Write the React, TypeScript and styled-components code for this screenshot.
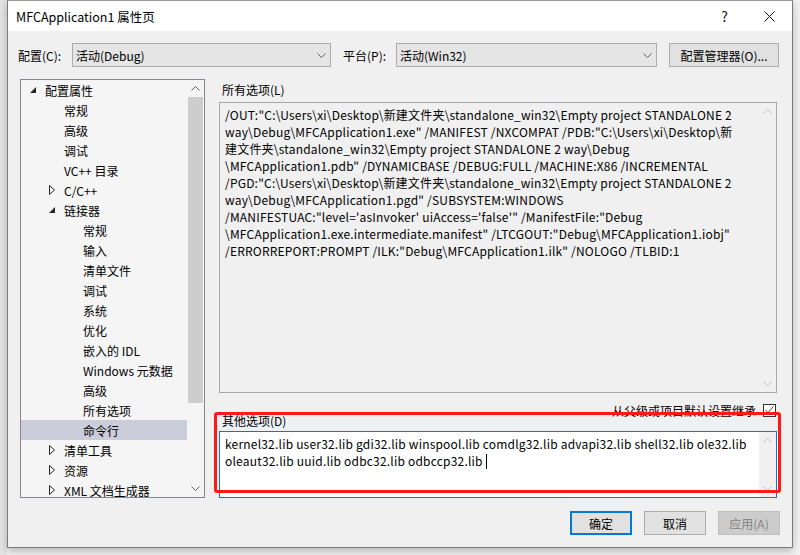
import React from 'react';
import styled, { createGlobalStyle } from 'styled-components';

const GlobalStyle = createGlobalStyle`
  html, body {
    margin: 0;
    padding: 0;
    background: #ececec;
  }
  body {
    font-family: "Noto Sans CJK SC", "Noto Sans", sans-serif;
    font-size: 12px;
    color: #000;
  }
`;

const Page = styled.div`
  width: 800px;
  height: 555px;
  overflow: hidden;
  background: linear-gradient(90deg, #e4e4e4 0, #e4e4e4 7px, #f2f2f2 7px);
`;

const Dialog = styled.div`
  position: relative;
  box-sizing: border-box;
  margin-left: 7px;
  width: 786px;
  height: 548px;
  border: 1px solid #7a7a7a;
  border-top-color: #9a9a9a;
  background: #f0f0f0;
  box-shadow: 0 3px 8px rgba(0, 0, 0, 0.25);
  display: flex;
  flex-direction: column;
`;

const TitleBar = styled.div`
  height: 30px;
  background: #fff;
  display: flex;
  align-items: center;
  padding-left: 8px;
`;

const TitleText = styled.div`
  flex: 1;
  font-size: 12.5px;
  padding-top: 1px;
`;

const TitleButton = styled.div`
  width: 45px;
  height: 30px;
  display: flex;
  align-items: center;
  justify-content: center;
  font-size: 14px;
  color: #111;
`;

const Body = styled.div`
  padding: 12px 12px 0 12px;
  display: flex;
  flex-direction: column;
`;

const TopRow = styled.div`
  display: flex;
  align-items: center;
  height: 24px;
`;

const FieldLabel = styled.label<{ $w: number; $shift?: number }>`
  width: ${(p) => p.$w}px;
  margin-left: ${(p) => p.$shift ?? 0}px;
  flex-shrink: 0;
  padding-top: 1px;
`;

const Select = styled.div<{ $w: number }>`
  box-sizing: border-box;
  width: ${(p) => p.$w}px;
  height: 24px;
  border: 1px solid #acacac;
  background: #e5e5e5;
  display: flex;
  align-items: center;
  padding: 0 0 0 3px;
  margin-right: 12px;
  flex-shrink: 0;
`;

const SelectValue = styled.span`
  flex: 1;
  padding-top: 1px;
`;

const Chevron = styled.span`
  width: 18px;
  display: flex;
  justify-content: center;
`;

const Button = styled.button<{ $variant?: 'default' | 'disabled'; $w: number }>`
  box-sizing: border-box;
  width: ${(p) => p.$w}px;
  height: 24px;
  font-family: "Noto Sans CJK SC", "Noto Sans", sans-serif;
  font-size: 12px;
  padding: 0;
  background: ${(p) => (p.$variant === 'disabled' ? '#cccccc' : '#e1e1e1')};
  color: ${(p) => (p.$variant === 'disabled' ? '#838383' : '#000')};
  border: ${(p) =>
    p.$variant === 'default' ? '2px solid #0078d7' : p.$variant === 'disabled' ? '1px solid #bfbfbf' : '1px solid #adadad'};
`;

const Main = styled.div`
  display: grid;
  grid-template-columns: 185px 558px;
  column-gap: 14px;
  margin-top: 12px;
`;

const Tree = styled.div`
  box-sizing: border-box;
  height: 419px;
  border: 1px solid #828790;
  background: #f5f5f5;
  display: flex;
  overflow: hidden;
`;

const TreeList = styled.div`
  flex: 1;
  overflow: hidden;
`;

const TreeRow = styled.div<{ $level: number; $selected?: boolean }>`
  height: 20px;
  display: flex;
  align-items: center;
  padding-left: ${(p) => 9 + p.$level * 19}px;
  background: ${(p) => (p.$selected ? '#cbcdda' : 'transparent')};
  white-space: nowrap;
`;

const Twisty = styled.span`
  width: 15px;
  display: flex;
  align-items: center;
  flex-shrink: 0;
`;

const ScrollBar = styled.div<{ $bg?: string }>`
  width: 17px;
  flex-shrink: 0;
  display: flex;
  flex-direction: column;
  align-items: center;
  background: ${(p) => p.$bg ?? 'transparent'};
`;

const ScrollArrow = styled.div`
  height: 17px;
  width: 17px;
  display: flex;
  align-items: center;
  justify-content: center;
`;

const ScrollTrack = styled.div`
  flex: 1;
  width: 15px;
`;

const ScrollThumb = styled.div`
  width: 15px;
  height: 306px;
  background: #cdcdcd;
`;

const RightCol = styled.div`
  display: flex;
  flex-direction: column;
`;

const SectionLabel = styled.div`
  height: 23px;
  padding-left: 3px;
  display: flex;
  align-items: center;
  padding-bottom: 2px;
  box-sizing: border-box;
`;

const TextBox = styled.div<{ $h: number; $active?: boolean }>`
  box-sizing: border-box;
  height: ${(p) => p.$h}px;
  border: 1px solid ${(p) => (p.$active ? '#0078d7' : '#a5a7ad')};
  background: ${(p) => (p.$active ? '#ffffff' : '#f0f0f0')};
  display: flex;
`;

const TextContent = styled.div`
  flex: 1;
  padding: 3px 0 0 5px;
  font-size: 12px;
  letter-spacing: 0.2px;
  line-height: 17px;
  white-space: pre;
  overflow: hidden;
`;

const Caret = styled.span`
  display: inline-block;
  width: 1px;
  height: 15px;
  background: #000;
  vertical-align: -3px;
`;

const InheritRow = styled.div`
  height: 38px;
  display: flex;
  justify-content: space-between;
`;

const InheritLabel = styled.div`
  align-self: flex-end;
  padding-left: 3px;
  padding-bottom: 2px;
`;

const InheritCheck = styled.div`
  display: flex;
  align-items: center;
  gap: 7px;
  padding-top: 9px;
  align-self: flex-start;
  height: 16px;
`;

const CheckBox = styled.span`
  box-sizing: border-box;
  width: 13px;
  height: 13px;
  border: 1px solid #333;
  background: #fff;
  display: flex;
  align-items: center;
  justify-content: center;
  margin-right: 1px;
`;

const ButtonRow = styled.div`
  display: flex;
  justify-content: flex-end;
  gap: 12px;
  margin-top: 13px;
`;

const Annotation = styled.div`
  position: absolute;
  left: 206px;
  top: 411px;
  width: 567px;
  height: 81px;
  box-sizing: border-box;
  border: 3px solid #ff1a1a;
  border-radius: 3px;
  pointer-events: none;
`;

const ChevronDown = ({ color = '#606060' }: { color?: string }) => (
  <svg width="9" height="5" viewBox="0 0 9 5">
    <polyline points="0.5,0.5 4.5,4.5 8.5,0.5" fill="none" stroke={color} strokeWidth="1" />
  </svg>
);

const ChevronUp = ({ color = '#606060' }: { color?: string }) => (
  <svg width="9" height="5" viewBox="0 0 9 5">
    <polyline points="0.5,4.5 4.5,0.5 8.5,4.5" fill="none" stroke={color} strokeWidth="1" />
  </svg>
);

const Expanded = () => (
  <svg width="6" height="6" viewBox="0 0 6 6">
    <polygon points="6,0 6,6 0,6" fill="#262626" />
  </svg>
);

const Collapsed = () => (
  <svg width="6" height="10" viewBox="0 0 6 10">
    <polygon points="0.5,0.5 5.5,5 0.5,9.5" fill="none" stroke="#262626" strokeWidth="1" />
  </svg>
);

type Node = { label: string; level: number; twisty?: 'open' | 'closed'; selected?: boolean };

const nodes: Node[] = [
  { label: '配置属性', level: 0, twisty: 'open' },
  { label: '常规', level: 1 },
  { label: '高级', level: 1 },
  { label: '调试', level: 1 },
  { label: 'VC++ 目录', level: 1 },
  { label: 'C/C++', level: 1, twisty: 'closed' },
  { label: '链接器', level: 1, twisty: 'open' },
  { label: '常规', level: 2 },
  { label: '输入', level: 2 },
  { label: '清单文件', level: 2 },
  { label: '调试', level: 2 },
  { label: '系统', level: 2 },
  { label: '优化', level: 2 },
  { label: '嵌入的 IDL', level: 2 },
  { label: 'Windows 元数据', level: 2 },
  { label: '高级', level: 2 },
  { label: '所有选项', level: 2 },
  { label: '命令行', level: 2, selected: true },
  { label: '清单工具', level: 1, twisty: 'closed' },
  { label: '资源', level: 1, twisty: 'closed' },
  { label: 'XML 文档生成器', level: 1, twisty: 'closed' },
];

const allOptions = [
  '/OUT:"C:\\Users\\xi\\Desktop\\新建文件夹\\standalone_win32\\Empty project STANDALONE 2',
  'way\\Debug\\MFCApplication1.exe" /MANIFEST /NXCOMPAT /PDB:"C:\\Users\\xi\\Desktop\\新',
  '建文件夹\\standalone_win32\\Empty project STANDALONE 2 way\\Debug',
  '\\MFCApplication1.pdb" /DYNAMICBASE /DEBUG:FULL /MACHINE:X86 /INCREMENTAL',
  '/PGD:"C:\\Users\\xi\\Desktop\\新建文件夹\\standalone_win32\\Empty project STANDALONE 2',
  'way\\Debug\\MFCApplication1.pgd" /SUBSYSTEM:WINDOWS',
  '/MANIFESTUAC:"level=\'asInvoker\' uiAccess=\'false\'" /ManifestFile:"Debug',
  '\\MFCApplication1.exe.intermediate.manifest" /LTCGOUT:"Debug\\MFCApplication1.iobj"',
  '/ERRORREPORT:PROMPT /ILK:"Debug\\MFCApplication1.ilk" /NOLOGO /TLBID:1',
];

const App = () => {
  return (
    <Page>
      <GlobalStyle />
      <Dialog>
        <TitleBar>
          <TitleText>MFCApplication1 属性页</TitleText>
          <TitleButton>?</TitleButton>
          <TitleButton>
            <svg width="11" height="11" viewBox="0 0 11 11">
              <path d="M0.5 0.5 L10.5 10.5 M10.5 0.5 L0.5 10.5" stroke="#111" strokeWidth="1" />
            </svg>
          </TitleButton>
        </TitleBar>

        <Body>
          <TopRow>
            <FieldLabel $w={54} $shift={-2}>配置(C):</FieldLabel>
            <Select $w={259}>
              <SelectValue>活动(Debug)</SelectValue>
              <Chevron><ChevronDown /></Chevron>
            </Select>
            <FieldLabel $w={53}>平台(P):</FieldLabel>
            <Select $w={261}>
              <SelectValue>活动(Win32)</SelectValue>
              <Chevron><ChevronDown /></Chevron>
            </Select>
            <Button $w={110}>配置管理器(O)...</Button>
          </TopRow>

          <Main>
            <Tree>
              <TreeList>
                {nodes.map((n, i) => (
                  <TreeRow key={i} $level={n.level} $selected={n.selected}>
                    <Twisty>
                      {n.twisty === 'open' && <Expanded />}
                      {n.twisty === 'closed' && <Collapsed />}
                    </Twisty>
                    {n.label}
                  </TreeRow>
                ))}
              </TreeList>
              <ScrollBar>
                <ScrollArrow><ChevronUp /></ScrollArrow>
                <ScrollThumb />
                <ScrollTrack />
                <ScrollArrow><ChevronDown /></ScrollArrow>
              </ScrollBar>
            </Tree>

            <RightCol>
              <SectionLabel>所有选项(L)</SectionLabel>
              <TextBox $h={291}>
                <TextContent>
                  {allOptions.map((l, i) => (
                    <div key={i}>{l}</div>
                  ))}
                </TextContent>
                <ScrollBar>
                  <ScrollArrow><ChevronUp color="#c0c0c0" /></ScrollArrow>
                  <ScrollTrack />
                  <ScrollArrow><ChevronDown color="#c0c0c0" /></ScrollArrow>
                </ScrollBar>
              </TextBox>

              <InheritRow>
                <InheritLabel>其他选项(D)</InheritLabel>
                <InheritCheck>
                  <span>从父级或项目默认设置继承</span>
                  <CheckBox>
                    <svg width="9" height="8" viewBox="0 0 9 8">
                      <polyline points="0.5,4 3,6.5 8.5,0.5" fill="none" stroke="#444" strokeWidth="1" />
                    </svg>
                  </CheckBox>
                </InheritCheck>
              </InheritRow>

              <TextBox $h={67} $active>
                <TextContent>
                  <div>kernel32.lib user32.lib gdi32.lib winspool.lib comdlg32.lib advapi32.lib shell32.lib ole32.lib</div>
                  <div>oleaut32.lib uuid.lib odbc32.lib odbccp32.lib <Caret /></div>
                </TextContent>
                <ScrollBar $bg="#f0f0f0">
                  <ScrollArrow><ChevronUp color="#c0c0c0" /></ScrollArrow>
                  <ScrollTrack />
                  <ScrollArrow><ChevronDown color="#c0c0c0" /></ScrollArrow>
                </ScrollBar>
              </TextBox>
            </RightCol>
          </Main>

          <ButtonRow>
            <Button $w={62} $variant="default">确定</Button>
            <Button $w={62}>取消</Button>
            <Button $w={62} $variant="disabled">应用(A)</Button>
          </ButtonRow>
        </Body>

        <Annotation />
      </Dialog>
    </Page>
  );
};

export default App;
